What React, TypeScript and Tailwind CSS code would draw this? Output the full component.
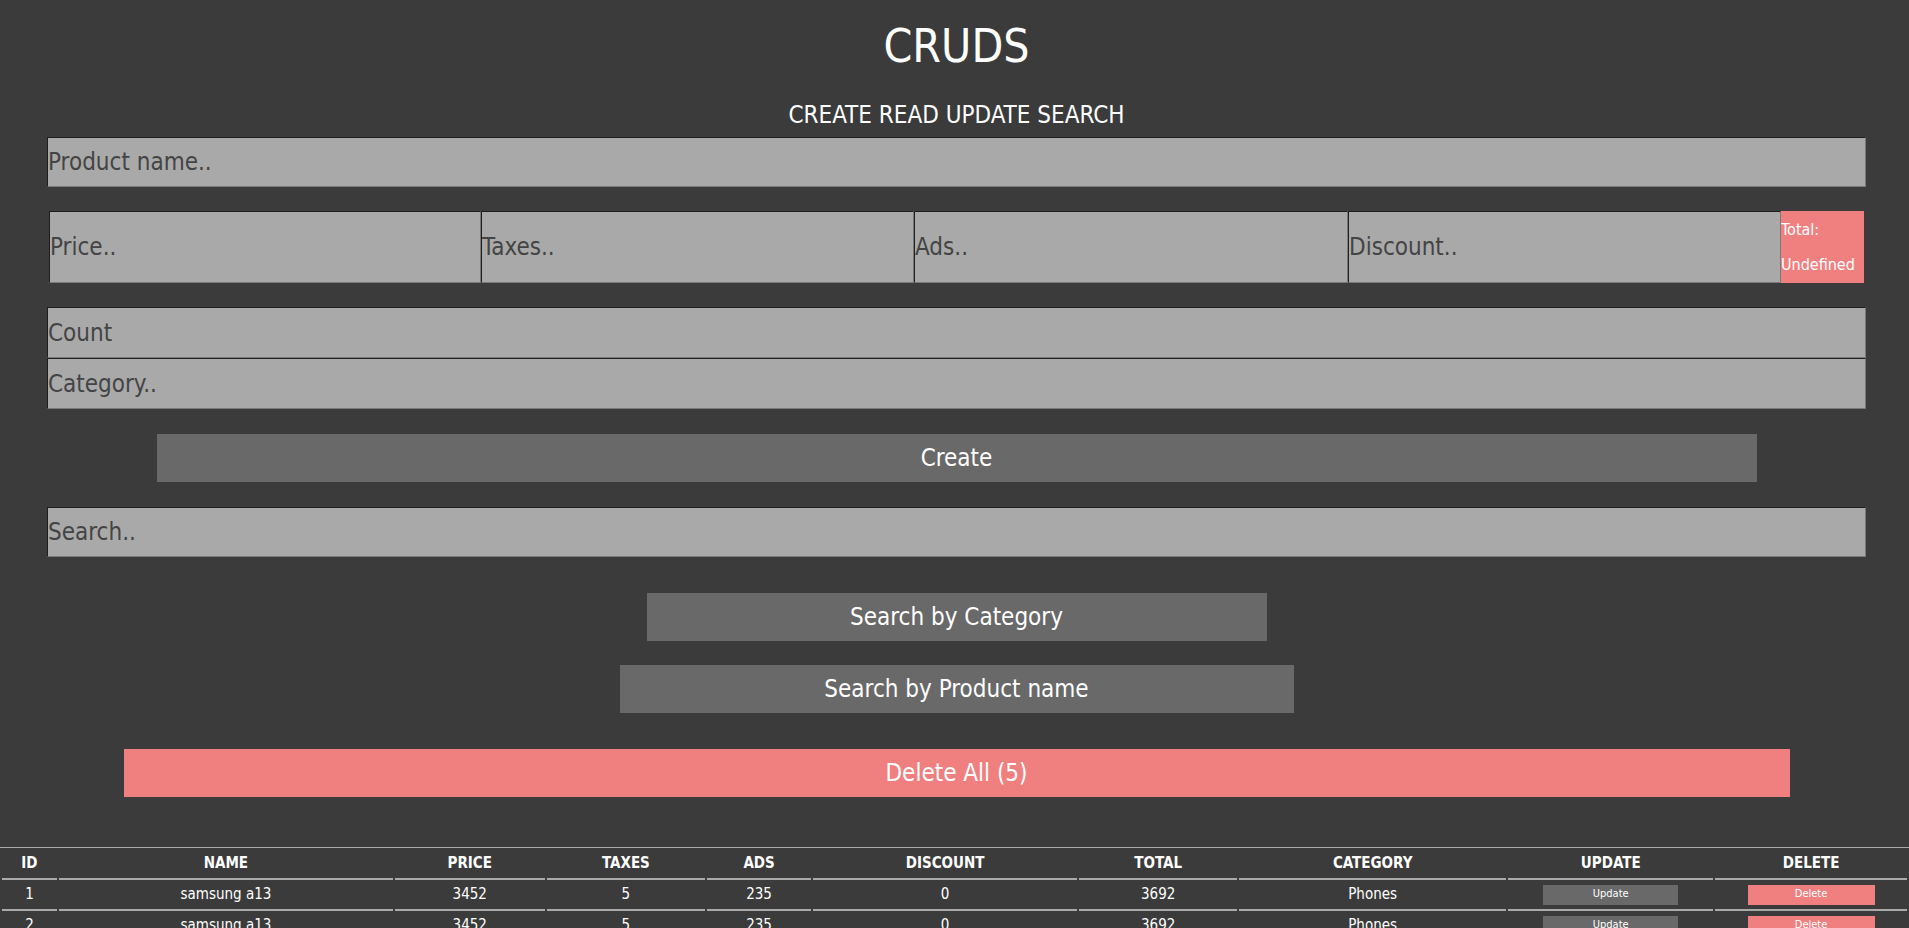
const rows = [1, 2, 3, 4, 5].map((id) => ({
  id,
  name: "samsung a13",
  price: 3452,
  taxes: 5,
  ads: 235,
  discount: 0,
  total: 3692,
  category: "Phones",
}));

const fieldCls =
  "block bg-[#a9a9a9] text-[24px] text-[#444] placeholder:text-[#444] outline-none border border-t-[#1e1e1e] border-l-[#1e1e1e] border-b-[#7a7a7a] border-r-[#7a7a7a] px-0";

const cols = [
  { label: "ID", w: "w-[55px]" },
  { label: "NAME", w: "w-[335px]" },
  { label: "PRICE", w: "w-[150px]" },
  { label: "TAXES", w: "w-[159px]" },
  { label: "ADS", w: "w-[104px]" },
  { label: "DISCOUNT", w: "w-[265px]" },
  { label: "TOTAL", w: "w-[158px]" },
  { label: "CATEGORY", w: "w-[268px]" },
  { label: "UPDATE", w: "w-[205px]" },
  { label: "DELETE", w: "w-[192px]" },
];

export default function App() {
  return (
    <div
      className="min-h-screen bg-[#3b3b3b] text-white"
      style={{ fontFamily: "'Liberation Sans Narrow', 'DejaVu Sans Condensed', 'DejaVu Sans', sans-serif" }}
    >
      <div className="pl-[47px] pr-[43px]">
        {/* header */}
        <div className="pt-[18px] text-center">
          <h1 className="text-[46px] leading-[56px]">CRUDS</h1>
          <h2 className="mt-[27px] text-[24px] leading-[28px]">CREATE READ UPDATE SEARCH</h2>
        </div>

        {/* inputs */}
        <div className="mt-[8px]">
          <input className={`${fieldCls} h-[50px] w-full`} placeholder="Product name.." />

          <div className="mx-[2px] mt-[24px] flex h-[72px]">
            <input className={`${fieldCls} h-full w-[432px] min-w-0 flex-none`} placeholder="Price.." />
            <input className={`${fieldCls} h-full w-[433px] min-w-0 flex-none`} placeholder="Taxes.." />
            <input className={`${fieldCls} h-full w-[434px] min-w-0 flex-none`} placeholder="Ads.." />
            <input className={`${fieldCls} h-full w-[433px] min-w-0 flex-none`} placeholder="Discount.." />
            <div className="flex min-w-0 flex-1 flex-col justify-center overflow-hidden whitespace-nowrap bg-[#f08080] text-[16px] leading-[35px] text-white">
              <span>Total:</span>
              <span>Undefined</span>
            </div>
          </div>

          <input className={`${fieldCls} mt-[24px] h-[51px] w-full`} placeholder="Count" />
          <input className={`${fieldCls} h-[51px] w-full`} placeholder="Category.." />

          <button className="mx-auto mt-[25px] block h-[48px] w-[1600px] bg-[#696969] text-[24px] text-white">
            Create
          </button>

          <input className={`${fieldCls} mt-[25px] h-[50px] w-full`} placeholder="Search.." />

          <button className="mx-auto mt-[36px] block h-[48px] w-[620px] bg-[#696969] text-[24px] text-white">
            Search by Category
          </button>
          <button className="mx-auto mt-[24px] block h-[48px] w-[674px] bg-[#696969] text-[24px] text-white">
            Search by Product name
          </button>

          <button className="mx-auto mt-[36px] block h-[48px] w-[1666px] bg-[#f08080] text-[24px] text-white">
            Delete All (5)
          </button>
        </div>
      </div>

      {/* table */}
      <table className="mt-[50px] w-full border-separate border-spacing-x-[2px] border-spacing-y-0 border-t border-t-[#aaa] text-center">
        <thead>
          <tr>
            {cols.map((c) => (
              <th key={c.label} className={`${c.w} h-[32px] border-b-2 border-b-[#aaa] text-[15px] font-bold`}>
                {c.label}
              </th>
            ))}
          </tr>
        </thead>
        <tbody>
          {rows.map((r) => (
            <tr key={r.id} className="text-[15px]">
              <td className="h-[31px] border-b-2 border-b-[#aaa]">{r.id}</td>
              <td className="border-b-2 border-b-[#aaa]">{r.name}</td>
              <td className="border-b-2 border-b-[#aaa]">{r.price}</td>
              <td className="border-b-2 border-b-[#aaa]">{r.taxes}</td>
              <td className="border-b-2 border-b-[#aaa]">{r.ads}</td>
              <td className="border-b-2 border-b-[#aaa]">{r.discount}</td>
              <td className="border-b-2 border-b-[#aaa]">{r.total}</td>
              <td className="border-b-2 border-b-[#aaa]">{r.category}</td>
              <td className="border-b-2 border-b-[#aaa]">
                <button className="mx-auto block h-[20px] w-[135px] bg-[#696969] text-[11px] text-white">Update</button>
              </td>
              <td className="border-b-2 border-b-[#aaa]">
                <button className="mx-auto block h-[20px] w-[127px] bg-[#f08080] text-[11px] text-white">Delete</button>
              </td>
            </tr>
          ))}
        </tbody>
      </table>
    </div>
  );
}
